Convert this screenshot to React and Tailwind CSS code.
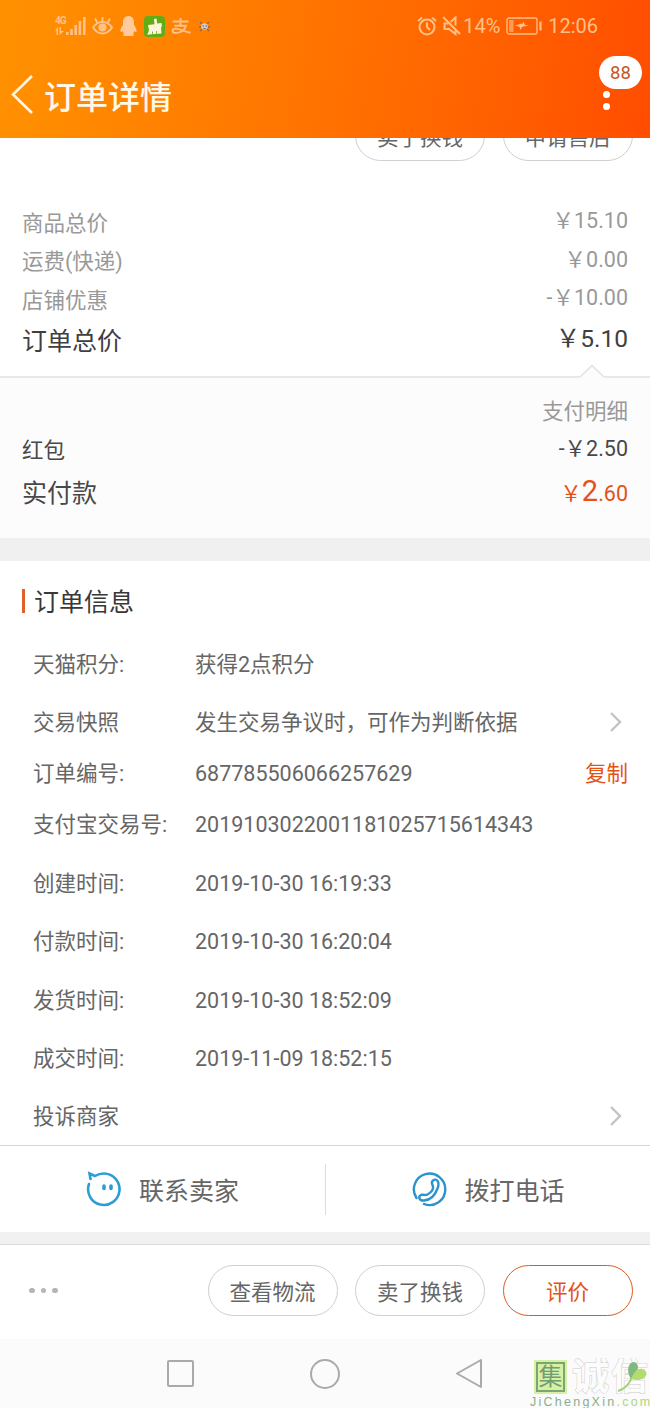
const prices = [
  { label: "商品总价", value: "￥15.10" },
  { label: "运费(快递)", value: "￥0.00" },
  { label: "店铺优惠", value: "-￥10.00" },
];

const info = [
  { label: "天猫积分:", value: "获得2点积分", gap: true },
  { label: "交易快照", value: "发生交易争议时，可作为判断依据", gap: true, arrow: true },
  { label: "订单编号:", value: "687785506066257629", copy: true },
  { label: "支付宝交易号:", value: "2019103022001181025715614343" },
  { label: "创建时间:", value: "2019-10-30 16:19:33", gap: true },
  { label: "付款时间:", value: "2019-10-30 16:20:04", gap: true },
  { label: "发货时间:", value: "2019-10-30 18:52:09", gap: true },
  { label: "成交时间:", value: "2019-11-09 18:52:15", gap: true },
  { label: "投诉商家", value: "", gap: true, arrow: true },
];

function Pill({ children, active }) {
  return (
    <button
      className={
        active
          ? "w-[130px] h-[51px] pt-[4px] shrink-0 rounded-full border-[1.5px] border-[#dd5a1f] text-[#e35316]"
          : "w-[130px] h-[51px] pt-[4px] shrink-0 rounded-full border-[1.5px] border-[#cfcfcf] text-[#666]"
      }
    >
      {children}
    </button>
  );
}

function Arrow() {
  return (
    <svg width="14" height="22" viewBox="0 0 14 22" fill="none" stroke="#c4c4c4" strokeWidth="2.4">
      <path d="M2 2l9 9-9 9" />
    </svg>
  );
}

function StatusBar() {
  return (
    <div className="h-[52px] pl-[55px] pr-[52px] flex items-center justify-between text-[#ffc188]">
      <div className="flex items-center">
        {/* Signal */}
        <div className="relative w-[31px] h-[20px]">
          <span className="absolute left-0 top-0 text-[10px] leading-[9px] font-bold tracking-[-1px]">4G</span>
          <svg width="31" height="20" viewBox="0 0 31 20" fill="currentColor">
            <path d="M3 11v8H1.500v-4.500H0zM4.500 11h1.500v4h3l-4.500 4z" />
            <rect x="11" y="16" width="2.6" height="3" />
            <rect x="15.2" y="13" width="2.6" height="6" />
            <rect x="19.4" y="9" width="2.6" height="10" />
            <rect x="23.6" y="5" width="2.6" height="14" />
            <rect x="28" y="1" width="2.6" height="18" />
          </svg>
        </div>
        {/* Eye */}
        <svg className="ml-[6px]" width="21" height="20" viewBox="0 0 21 20" fill="none" stroke="currentColor" strokeWidth="2">
          <path d="M1 11.500Q5 6 10.500 6T20 11.500Q16 17.500 10.500 17.500T1 11.500zM10.500 6V1M5.500 7L3 2.500M15.500 7L18 2.500" />
          <circle cx="10.500" cy="11.500" r="4" fill="currentColor" stroke="none" />
        </svg>
        {/* QQ */}
        <svg className="ml-[7px]" width="17" height="20" viewBox="0 0 17 20" fill="#ffcb9c">
          <path d="M8.500 0C5 0 3 2.800 3 6v3C1 11.500 0 14 .6 15.700c.4.700 1.200 0 1.900-1 .2 1.300.8 2 1.500 2.800C3 18 2.700 20 5 20h7c2.300 0 2-2 1-2.500.7-.8 1.300-1.500 1.500-2.800.7 1 1.500 1.700 1.900 1 .6-1.700-.4-4.200-2.400-6.700V6c0-3.200-2-6-5.500-6z" />
        </svg>
        {/* Cleaner */}
        <svg className="ml-[7px]" width="21" height="21" viewBox="0 0 21 21">
          <rect width="21" height="21" rx="4" fill="#62ad16" />
          <path d="M10 3l2.500-.5.7 5 4.300-.6.400 3.800-13.400 1.900-.4-3.500 6.400-.9z" fill="#fff5d8" />
          <path d="M5 12l12-1.500.5 7-12.500 1-2 .3c1.200-1.600 2-3.500 2-6.800z" fill="#fff5d8" />
          <path d="M8.500 15.500v3M12.500 15v3" stroke="#62ad16" strokeWidth=".8" />
        </svg>
        {/* Alipay */}
        <svg className="ml-[6px]" width="20" height="18" viewBox="0 0 20 18" fill="none" stroke="currentColor" strokeWidth="1.900">
          <path d="M1.500 4.500h16M9.500 1v8M3.500 8.800h11.500C13.500 13.500 9.500 16 4.500 16 1 16 .5 12.200 4 11.700c4.500-.6 9 3.300 15.500 4" />
        </svg>
        {/* Notification thumbnail */}
        <svg className="ml-[8px]" width="11" height="11" viewBox="0 0 11 11">
          <path d="M1 1l2 2M10 1L8 3M0 6h2M9 6h2M1 10l2-2M10 10L8 8" stroke="#8c6a4a" strokeWidth="1.400" />
          <circle cx="5.500" cy="5.500" r="3.300" fill="#d7cbbf" />
          <path d="M3.500 5h1.500M6.500 5H8M4.500 7.500h2" stroke="#6b584c" />
        </svg>
      </div>
      <div className="flex items-center text-[20px]">
        {/* Alarm */}
        <svg width="20" height="20" viewBox="0 0 20 20" fill="none" stroke="currentColor" strokeWidth="2">
          <circle cx="10" cy="11" r="7.500" />
          <path d="M10 6.500V11l3 3M1 5l4-3.500M19 5l-4-3.500" />
        </svg>
        {/* Muted */}
        <svg className="ml-[5px]" width="20" height="20" viewBox="0 0 20 20" fill="none" stroke="currentColor" strokeWidth="2">
          <path d="M1 1l17 17M8.500 6l5-4.500V9.500M13.500 14v4l-6.500-5H2.500V7.500h4" />
        </svg>
        <span className="ml-[1px] w-[37px]">14%</span>
        <svg className="ml-[6px]" width="36" height="18" viewBox="0 0 36 18" fill="none" stroke="currentColor" strokeWidth="1.300">
          <rect x="1" y="1" width="30" height="16" rx="2" />
          <rect x="3" y="3" width="4.500" height="12" fill="currentColor" stroke="none" opacity=".6" />
          <path d="M9 8.500l7-2v1.200l1.500-3 1.500 3.300h4l-7 2-1.500 3-1-3.300z" fill="currentColor" stroke="none" />
          <path d="M34.500 4.500v9" strokeWidth="2.200" />
        </svg>
        <span className="ml-[6px]">12:06</span>
      </div>
    </div>
  );
}

function Watermark() {
  return (
    <div className="absolute left-[530px] top-[19px] w-[120px] h-[51px] overflow-hidden">
      <div className="flex items-center h-[38px]">
        <div className="ml-[4px] w-[33px] h-[34px] shrink-0 bg-[#d8f0a4] p-[2px]">
          <div className="w-full h-full border-2 border-[#79a673] text-[#6fa072] text-[24px] leading-[24px] flex items-center justify-center">
            集
          </div>
        </div>
        <svg className="ml-[5px] shrink-0" width="78" height="38" viewBox="0 0 78 38">
          <text x="0" y="32" fontSize="37" fontWeight="700" textLength="76" fill="#fcfcfc" stroke="#cdcdcd" strokeWidth="1" paintOrder="stroke">
            诚信
          </text>
          <path d="M46 33Q56 30 60 19" stroke="#a6cf72" strokeWidth="2" fill="none" />
          <path d="M59 21C54 14 56 5 61 4c4 0 5 3 5 6-1 4-4 8-7 11z" fill="#7fb980" />
          <path d="M59 21c3-7 6-11 11-10s6 6 2 9c-3 2-8 3-13 1z" fill="#b3db70" />
        </svg>
      </div>
      <div className="text-[12.500px] leading-[13px] tracking-[2.250px] whitespace-nowrap font-['Liberation_Sans'] text-[#8aae8d]">
        JiChengXin<span className="text-[#b0d67c]">.com</span>
      </div>
    </div>
  );
}

export default function App() {
  return (
    <div className="w-[650px] h-[1408px] overflow-hidden flex flex-col bg-white text-[21.500px] leading-[30px] text-[#666] font-[Roboto,'Noto_Sans_CJK_SC',sans-serif]">
      <header className="h-[138px] shrink-0 bg-linear-100 from-[#ff9200] to-[#ff4c00]">
        <StatusBar />
        <div className="h-[86px] flex items-center">
          <svg className="ml-[10px]" width="24" height="40" viewBox="0 0 24 40" fill="none" stroke="#fff6df" strokeWidth="2.600">
            <path d="M22 1L3 19.500 22 38" />
          </svg>
          <h1 className="ml-[10px] pt-[5px] text-[32px] leading-[40px] font-medium text-[#fff8e8]">订单详情</h1>
          <div className="relative ml-auto mr-[7px] w-[44px] h-[86px]">
            <span className="absolute left-0 top-[4px] w-[43px] h-[33px] rounded-full bg-white text-[#c95522] text-[18.500px] leading-[34px] text-center">
              88
            </span>
            <span className="absolute left-[4px] top-[39px] size-[7px] rounded-full bg-white" />
            <span className="absolute left-[4px] top-[51px] size-[7px] rounded-full bg-white" />
          </div>
        </div>
      </header>

      {/* Buttons scrolled under the header */}
      <div className="h-[23px] shrink-0 overflow-hidden flex items-end justify-end gap-[17.500px] pr-[17.500px]">
        <Pill>卖了换钱</Pill>
        <Pill>申请售后</Pill>
      </div>

      <section className="h-[215px] shrink-0 pt-[42px] px-[22px]">
        {prices.map((p) => (
          <div key={p.label} className="h-[38.500px] flex items-center justify-between text-[#999]">
            <span className="pt-[3px]">{p.label}</span>
            <span className="pb-[2px]">{p.value}</span>
          </div>
        ))}
        <div className="h-[43px] flex items-center justify-between text-[25px] text-[#3f3f3f]">
          <span className="pt-[3px]">订单总价</span>
          <span className="pb-[3px] text-[24.500px]">￥5.10</span>
        </div>
      </section>

      <section className="relative h-[162px] shrink-0 border-t-2 border-[#e8e8e8] bg-[#fcfcfc] px-[22px] pt-[13px]">
        <svg className="absolute right-[46px] -top-[14px]" width="24" height="15" viewBox="0 0 24 15">
          <path d="M0 13L12 1.500 24 13v2H0z" fill="#fcfcfc" />
          <path d="M0 13L12 1.500 24 13" fill="none" stroke="#e2e2e2" strokeWidth="1.600" />
        </svg>
        <div className="h-[38px] pt-[4px] flex items-center justify-end text-[#999]">支付明细</div>
        <div className="h-[39px] flex items-center justify-between text-[#484848]">
          <span className="pt-[4px]">红包</span>
          <span>-￥2.50</span>
        </div>
        <div className="h-[46px] flex items-center justify-between text-[25px] text-[#484848]">
          <span className="pt-[5px]">实付款</span>
          <span className="pt-[2px] text-[21.500px] text-[#e35316]">
            ￥<span className="text-[29px]">2</span>.60
          </span>
        </div>
      </section>

      <div className="h-[23px] shrink-0 bg-[#f0f0f0]" />

      <section className="h-[584px] shrink-0 pt-[20px]">
        <div className="h-[40px] mb-[17px] ml-[22px] flex items-center text-[25px] text-[#383838]">
          <span className="w-[3px] h-[24px] mr-[9px] bg-[#e0602a]" />
          <span className="pt-[3px]">订单信息</span>
        </div>
        {info.map((row) => (
          <div
            key={row.label}
            className={row.gap ? "mt-[7.400px] h-[51px] flex items-center pl-[33px]" : "h-[51px] flex items-center pl-[33px]"}
          >
            <span className="w-[162px] pt-[3px] shrink-0">{row.label}</span>
            <span className="pt-[3px] whitespace-nowrap">{row.value}</span>
            {row.arrow && (
              <span className="ml-auto mr-[27px]">
                <Arrow />
              </span>
            )}
            {row.copy && <span className="ml-auto mr-[22px] pt-[3px] text-[#e35316]">复制</span>}
          </div>
        ))}
      </section>

      <section className="h-[87px] shrink-0 border-t border-[#d6d6d6] flex items-center text-[25px]">
        <div className="flex-1 flex items-center pl-[86px] gap-[18px]">
          <svg width="35" height="36" viewBox="0 0 35 36" fill="none" stroke="#2a9fd6" strokeWidth="2.600" strokeLinecap="round">
            <path d="M9 5Q13 2.500 18 2.500A15.700 15.700 0 1 1 3 13M9 5L3.500 2.500 4.500 8" />
            <path d="M18 15v2.500M25 15v2.500" strokeWidth="3.600" />
          </svg>
          <span className="pt-[5px]">联系卖家</span>
        </div>
        <div className="w-px h-[51px] bg-[#dedede]" />
        <div className="flex-1 flex items-center pl-[86px] gap-[18px]">
          <svg width="35" height="36" viewBox="0 0 35 36" fill="none" stroke="#2a94cf" strokeWidth="2.400" strokeLinecap="round" strokeLinejoin="round">
            <path d="M4.500 27A15.700 15.700 0 1 1 12 33" />
            <path d="M21 9.500c4-3 7 2 4.500 8-2.500 7-7 11.500-13.500 12-5 .5-6-4-3-5.500 3-1 4 1 6.500-.5 3.500-2 6-5 5.500-8-.5-2-2.500-4 0-6z" />
          </svg>
          <span className="pt-[5px]">拨打电话</span>
        </div>
      </section>

      <div className="h-[12px] shrink-0 bg-[#f1f1f1]" />

      <section className="h-[95px] shrink-0 border-t border-[#dcdcdc] flex items-center justify-end gap-[17.500px] pr-[17.500px] pb-[3px]">
        <div className="flex gap-[6px] mr-auto ml-[29px]">
          <span className="size-[5.500px] rounded-full bg-[#b5b5b5]" />
          <span className="size-[5.500px] rounded-full bg-[#b5b5b5]" />
          <span className="size-[5.500px] rounded-full bg-[#b5b5b5]" />
        </div>
        <Pill>查看物流</Pill>
        <Pill>卖了换钱</Pill>
        <Pill active>评价</Pill>
      </section>

      {/* Android navigation */}
      <nav className="relative h-[70px] shrink-0 bg-[#fbfbfb] flex items-center pl-[165px] gap-[114px]">
        <svg width="31" height="31" viewBox="0 0 31 31" fill="none" stroke="#aaa" strokeWidth="2">
          <rect x="3" y="2" width="25" height="25" rx="1" />
        </svg>
        <svg width="31" height="31" viewBox="0 0 31 31" fill="none" stroke="#aaa" strokeWidth="2">
          <circle cx="15" cy="15" r="14" />
        </svg>
        <svg width="31" height="31" viewBox="0 0 31 31" fill="none" stroke="#aaa" strokeWidth="2" strokeLinejoin="round">
          <path d="M2 14.500L26 1v27z" />
        </svg>
        <Watermark />
      </nav>
    </div>
  );
}
